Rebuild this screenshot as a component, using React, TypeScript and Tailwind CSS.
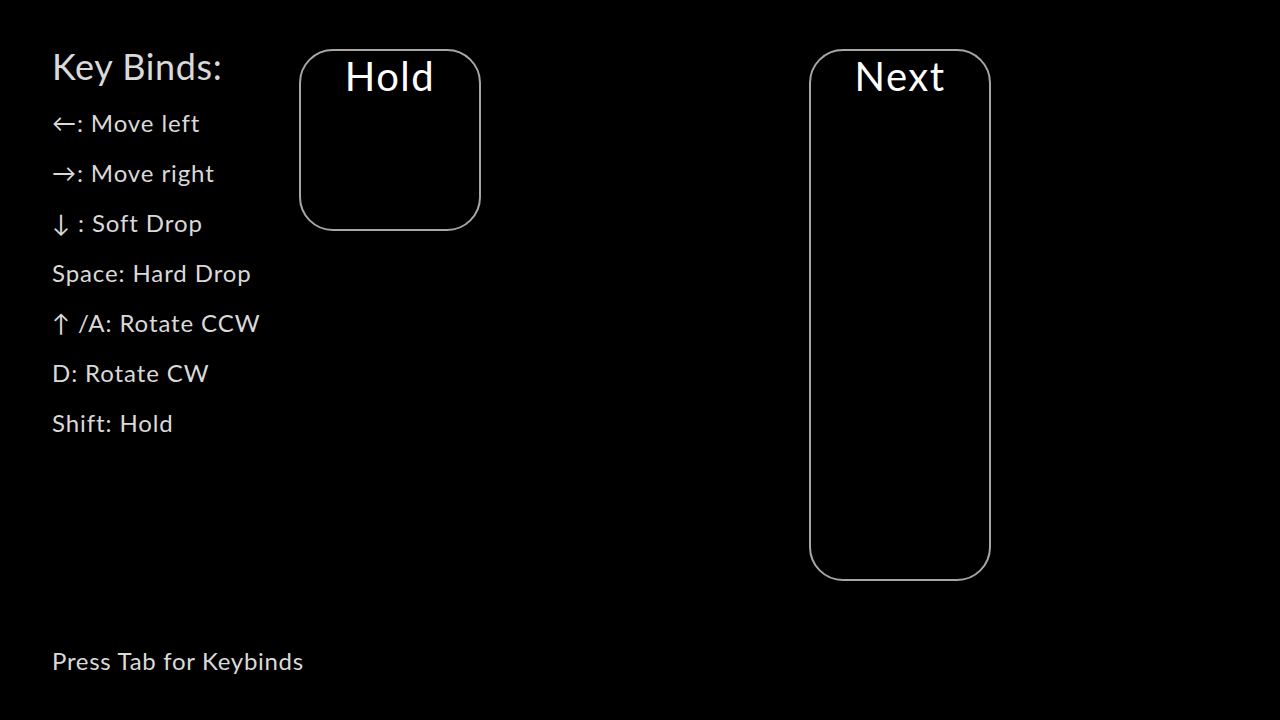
import React from "react";

const binds = [
  "←: Move left",
  "→: Move right",
  "↓ : Soft Drop",
  "Space: Hard Drop",
  "↑ /A: Rotate CCW",
  "D: Rotate CW",
  "Shift: Hold",
];

const Panel: React.FC<{ title: string; tall?: boolean }> = ({ title, tall }) => (
  <div
    className={`w-[182px] ${tall ? "h-[532px]" : "h-[182px]"} rounded-[34px] border-2 border-[#a6a6a6] flex justify-center`}
  >
    <span className="text-[40px] leading-[52px] tracking-[1.5px] text-white -mt-[1px]">{title}</span>
  </div>
);

export default function App() {
  return (
    <div
      className="w-[1280px] h-[720px] bg-black flex overflow-hidden"
      style={{ fontFamily: "Lato, 'Noto Sans', sans-serif" }}
    >
      {/* Key binds column */}
      <div className="w-[299px] shrink-0 h-full pl-[52px] pt-[44px] pb-[39px] flex flex-col justify-between text-[#d9d9d9]">
        <div>
          <h1 className="text-[36px] leading-[44px] tracking-[0.6px] mb-[10px]">Key Binds:</h1>
          <ul>
            {binds.map((b) => (
              <li key={b} className="text-[24px] leading-[50px] tracking-[0.9px] whitespace-nowrap">
                {b}
              </li>
            ))}
          </ul>
        </div>
        <p className="text-[24px] leading-[40px] tracking-[0.7px] whitespace-nowrap">Press Tab for Keybinds</p>
      </div>

      {/* Hold */}
      <div className="pt-[49px]">
        <Panel title="Hold" />
      </div>

      {/* Next */}
      <div className="pt-[49px] ml-[328px]">
        <Panel title="Next" tall />
      </div>
    </div>
  );
}
